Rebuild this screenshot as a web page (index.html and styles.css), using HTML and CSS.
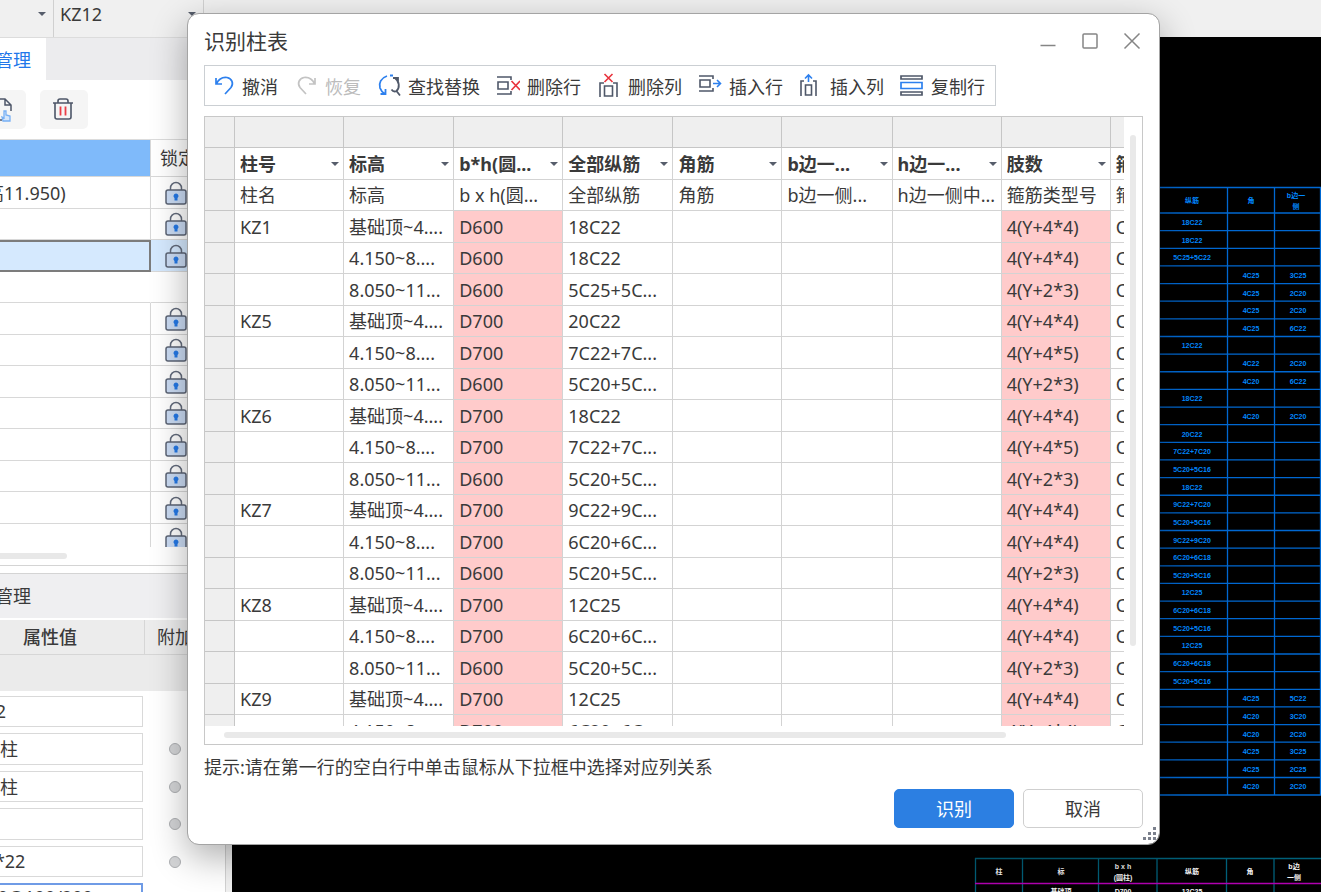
FILE: index.html
```
<!DOCTYPE html>
<html lang="zh-CN">
<head>
<meta charset="utf-8">
<title>识别柱表</title>
<link rel="stylesheet" href="styles.css">
</head>
<body>
<svg class="defs" aria-hidden="true">
  <symbol id="lock" viewBox="0 0 22 24">
    <path d="M5.500 10V7a5.500 5.500 0 0 1 11 0v3" fill="none" stroke="#636b7c" stroke-width="1.500"/>
    <rect x="1" y="9" width="20" height="14" rx="2" fill="#cbdcf4" stroke="#5c6475" stroke-width="1.500"/>
    <path d="M11 12.500a2.500 2.500 0 0 1 1.500 4.500V19.500h-3v-2.500A2.500 2.500 0 0 1 11 12.500z" fill="#2478e6"/>
  </symbol>
</svg>
<div class="app">
  <header class="topbar">
    <select class="combo combo-layer" aria-label="楼层"><option>柱</option></select>
    <select class="combo combo-member" aria-label="构件"><option>KZ12</option></select>
  </header>
  <div class="workspace">
    <aside class="side">
      <nav class="tabs"><a class="tab" href="#drawings">图纸管理</a></nav>
      <div class="tools">
        <button class="tool" aria-label="定位图纸"><svg width="26" height="26" viewBox="0 0 26 26" fill="none"><path d="M7 2H16L22 8V14M16 2V8H22M13 23H5V3" stroke="#4d5668" stroke-width="1.500"/><path d="M15 14v7l-2-1 1 4h7v-5l-4-1v-4z" fill="#d5e6fb" stroke="#77b0f5" stroke-width="1.300"/></svg></button>
        <button class="tool" aria-label="删除"><svg width="26" height="26" viewBox="0 0 26 26" fill="none"><path d="M2 6H22M7 6V4a2 2 0 0 1 2-2h6a2 2 0 0 1 2 2V6M4 6V20a2 2 0 0 0 2 2H18a2 2 0 0 0 2-2V6" stroke="#4d5668" stroke-width="1.600"/><path d="M9.500 9.500V18.500M14.500 9.500V18.500" stroke="#ea3d46" stroke-width="1.800"/></svg></button>
      </div>
      <div class="drawings">
        <table class="drawing-table">
          <colgroup><col class="col-name"><col></colgroup>
          <thead><tr><th class="name-head"></th><th>锁定</th></tr></thead>
          <tbody id="drawing-rows"></tbody>
        </table>
      </div>
      <div class="side-scroll"><span></span></div>
      <h2 class="side-title">图层管理</h2>
      <div class="prop-head"><span class="prop-value">属性值</span><span class="prop-extra">附加</span></div>
      <div class="prop-band"></div>
      <div class="props">
        <div class="prop"><input aria-label="名称" value="KZ12"></div>
        <div class="prop"><input aria-label="结构类别" value="框架柱"><i></i></div>
        <div class="prop"><input aria-label="定额类别" value="框架柱"><i></i></div>
        <div class="prop"><input aria-label="截面宽度" value=""><i></i></div>
        <div class="prop"><input aria-label="全部纵筋" value="124*22"><i></i></div>
        <div class="prop"><input class="current" aria-label="箍筋" value="AC10@100/200"><i></i></div>
      </div>
    </aside>
    <main class="canvas">
      <svg class="cad" id="cad" role="img" aria-label="柱表图纸"></svg>
    </main>
  </div>
</div>

<section class="dialog" role="dialog" aria-labelledby="dialog-title">
  <header class="dialog-head">
    <h1 id="dialog-title">识别柱表</h1>
    <div class="win-buttons">
      <button aria-label="最小化"><svg width="18" height="18" viewBox="0 0 18 18"><path d="M1.500 13.500H16.500"/></svg></button>
      <button aria-label="最大化"><svg width="18" height="18" viewBox="0 0 18 18"><rect x="2" y="2" width="14" height="14" rx="1"/></svg></button>
      <button aria-label="关闭"><svg width="18" height="18" viewBox="0 0 18 18"><path d="M1.500 1.500L16.500 16.500M16.500 1.500L1.500 16.500"/></svg></button>
    </div>
  </header>
  <div class="toolbar" role="toolbar">
    <button><svg width="24" height="24" viewBox="0 0 24 24" fill="none" stroke="#2d80ee" stroke-width="1.700"><path d="M5 5V11H11M5.500 10.500C8 5.500 12 4 16 4.500C21 5.500 23 10.500 20 14.500L14 21"/></svg>撤消</button>
    <button class="off" disabled><svg width="24" height="24" viewBox="0 0 24 24" fill="none" stroke="#c3c3c3" stroke-width="1.700"><path d="M21 5V11H15M20.500 10.500C18 5.500 14 4 10 4.500C5 5.500 3 10.500 6 14.500L12 21"/></svg>恢复</button>
    <button><svg width="24" height="24" viewBox="0 0 24 24" fill="none" stroke-width="1.800"><path d="M10 3C4 5 1.500 10 3 15C4 18 5.500 19.500 8 21M3.500 21H8.500V16M13 2.500h3" stroke="#2d80ee"/><path d="M16 5h5v4M18 5C22.500 8.500 23 14.500 19.500 18C17.500 19 15.500 18 14.500 16.500M19.500 18L23 22.500" stroke="#4f5869"/></svg>查找替换</button>
    <button><svg width="24" height="24" viewBox="0 0 24 24" fill="none" stroke-width="1.600"><path d="M1 4H15V7M1 21H15V18M2 9H12V16H2z" stroke="#4f5869"/><path d="M15.500 8L24 17M24 8L15.500 17" stroke="#e8323c"/></svg>删除行</button>
    <button><svg width="24" height="24" viewBox="0 0 24 24" fill="none" stroke-width="1.600"><path d="M3 24V10H7M20 24V10H16M7.500 13H15.500V23H7.500z" stroke="#4f5869"/><path d="M7.500 1L15.500 9M15.500 1L7.500 9" stroke="#e8323c"/></svg>删除列</button>
    <button><svg width="24" height="24" viewBox="0 0 24 24" fill="none" stroke-width="1.600"><path d="M1 3H15V6M1 18H15V15M2 7H12V14H2z" stroke="#4f5869"/><path d="M15 10.500H22M19 7L22.500 10.500L19 14" stroke="#2d80ee"/></svg>插入行</button>
    <button><svg width="24" height="24" viewBox="0 0 24 24" fill="none" stroke-width="1.600"><path d="M5 8H2V23M14 8H17V23M6.500 12H12.500V22H6.500z" stroke="#4f5869"/><path d="M9.500 9V2M6 5.500L9.500 2L13 5.500" stroke="#2d80ee"/></svg>插入列</button>
    <button><svg width="24" height="24" viewBox="0 0 24 24" fill="none" stroke-width="1.700"><path d="M1 3H22V6H1zM1 19H22V22H1z" stroke="#4f5869"/><path d="M1 9.500H22V15.500H1z" stroke="#2d80ee"/></svg>复制行</button>
  </div>
  <div class="grid">
    <div class="grid-view">
      <table class="columns">
        <colgroup><col class="gutter"><col class="odd"><col class="even"><col class="odd"><col class="even"><col class="odd"><col class="even"><col class="odd"><col class="odd"><col class="odd"></colgroup>
        <tbody id="grid-rows"></tbody>
      </table>
    </div>
    <div class="vscroll"><span></span></div>
    <div class="hscroll"><span></span></div>
  </div>
  <p class="hint">提示:请在第一行的空白行中单击鼠标从下拉框中选择对应列关系</p>
  <footer class="actions">
    <button class="primary">识别</button>
    <button>取消</button>
  </footer>
  <svg class="grip" width="14" height="14" viewBox="0 0 14 14" fill="#7b808c"><path d="M10 0h3v3h-3zM10 5h3v3h-3zM5 5h3v3h-3zM10 10h3v3h-3zM5 10h3v3h-3zM0 10h3v3h-3z"/></svg>
</section>
<script src="app.js"></script>
</body>
</html>
```
FILE: styles.css
```
* { box-sizing: border-box; }
body {
  margin: 0;
  height: 100vh;
  overflow: hidden;
  background: #f0f0f0;
  color: #3a3a3a;
  font-family: "Noto Sans", "Noto Sans CJK SC", sans-serif;
  font-size: 18px;
  line-height: 26px;
}
button, input, select { font: inherit; color: inherit; }
button { cursor: pointer; }
table { border-collapse: separate; border-spacing: 0; table-layout: fixed; }
th, td { padding: 0; text-align: left; font-weight: 400; white-space: nowrap; overflow: hidden; }
.defs { position: absolute; width: 0; height: 0; }

/* The main window starts beyond the left edge of the screen */
.app { display: flex; flex-direction: column; height: 100vh; margin-left: -80px; }
.topbar { position: relative; display: flex; height: 37px; flex: none; background: #f0f0f0; }
.combo, .col-select {
  appearance: none;
  border: 0;
  outline: 0;
  background: transparent linear-gradient(#d0d0d0, #d0d0d0) no-repeat right / 1px 100%;
}
.combo { height: 37px; padding: 0 0 10px 6px; }
.combo-layer { width: 134px; }
.combo-member { width: 150px; }
.topbar::before, .topbar::after, .pick::after {
  content: "";
  border: 4px solid transparent;
  border-top-color: #565d6b;
  border-bottom: 0;
  position: absolute;
  pointer-events: none;
}
.topbar::before { left: 118px; top: 12px; }
.topbar::after { left: 268px; top: 12px; }

.workspace { display: flex; flex: 1; min-height: 0; }
.side {
  width: 306px;
  flex: none;
  display: flex;
  flex-direction: column;
  overflow: hidden;
  background: #fff;
  border-right: 1px solid #d2d2d2;
}
.tabs { display: flex; flex: none; height: 43px; background: #ececee; border-top: 1px solid #dcdcdc; }
.tab { width: 126px; padding: 9px 0 0 39px; background: #fff; color: #2277ea; text-decoration: none; }
.tools { display: flex; flex: none; gap: 14px; height: 59px; padding: 10px 0 10px 58px; }
.tool {
  display: grid;
  place-items: center;
  width: 48px;
  height: 39px;
  padding: 0;
  border: 0;
  border-radius: 5px;
  background: #f5f5f5;
}
.drawings { height: 408px; flex: none; overflow: hidden; border-top: 1px solid #dcdcdc; }
.drawing-table { width: 100%; }
.col-name { width: 231px; }
.drawing-table tr { height: 31px; }
.drawing-table tbody tr:nth-child(odd) { height: 32px; }
.drawing-table thead tr { height: 37px; }
.drawing-table th, .drawing-table td { border-bottom: 1px solid #d8d8d8; border-right: 1px solid #d8d8d8; }
.drawing-table th { padding-left: 9px; }
.drawing-table .name-head { background: #7fbafa; }
.drawing-table td:first-child { padding-left: 66px; }
.drawing-table td + td { padding-left: 14px; }
.drawing-table td svg { display: block; width: 22px; height: 24px; }
.drawing-table .blank td { border-right-color: transparent; }
.drawing-table .chosen td { background: #d5e9fe; }
.drawing-table .chosen td:first-child { border: 2px solid #7c7c7c; }
.side-scroll { flex: none; height: 19px; padding-top: 6px; border-bottom: 1px solid #d4d4d4; }
.side-scroll span { display: block; width: 147px; height: 6px; border-radius: 3px; background: #e8e8e8; }
.side-title {
  flex: none;
  height: 45px;
  margin: 7px 0 2px;
  padding: 9px 0 0 39px;
  font-size: 18px;
  font-weight: 400;
  background: #efeff1;
  border-top: 1px solid #d4d4d4;
}
.prop-head { display: flex; flex: none; height: 35px; background: #ececec; border-bottom: 1px solid #d6d6d6; line-height: 35px; }
.prop-value { width: 225px; padding-left: 103px; border-right: 1px solid #d6d6d6; font-weight: 500; }
.prop-extra { padding-left: 12px; }
.prop-band { flex: none; height: 36px; background: #ebebeb; }
.props { display: flex; flex-direction: column; gap: 6px; padding-top: 5px; }
.prop { display: flex; align-items: center; gap: 26px; flex: none; }
.prop input {
  width: 223px;
  height: 31px;
  padding: 0 0 2px 43px;
  border: 1px solid #d9d9d9;
  background: #fff;
  outline: 0;
}
.prop:nth-child(even) input { height: 32px; }
.prop .current { padding-bottom: 4px; border: 2px solid #6f9be6; }
.prop i { width: 12px; height: 12px; border: 1px solid #aeb0b3; border-radius: 50%; background: #d4d5d7; }
.canvas { flex: 1; min-width: 0; margin-left: 6px; background: #000; overflow: hidden; }
.cad { display: block; width: 100%; height: 100%; font-family: "Liberation Sans", "Noto Sans CJK SC", sans-serif; font-weight: 700; font-size: 7px; }

.dialog {
  position: absolute;
  inset: 13px 161px 47px 187px;
  display: flex;
  flex-direction: column;
  padding: 0 16px 16px;
  border: 1px solid #a4a4a4;
  border-radius: 12px;
  background: #fff;
  background-clip: padding-box;
  box-shadow: 0 12px 36px rgba(0, 0, 0, .32);
}
.dialog-head { display: flex; justify-content: space-between; height: 51px; flex: none; }
.dialog-head h1 { margin: 13px 0 0; font-size: 21px; line-height: 28px; font-weight: 400; }
.win-buttons { display: flex; gap: 24px; margin: 18px 2px 0 0; }
.win-buttons button { width: 18px; height: 18px; padding: 0; border: 0; background: none; }
.win-buttons svg { display: block; fill: none; stroke: #858585; stroke-width: 1.5; }
.toolbar {
  display: flex;
  align-self: flex-start;
  gap: 16px;
  height: 41px;
  flex: none;
  padding: 0 10px 0 6px;
  border: 1px solid #cbcfd3;
}
.toolbar button { display: flex; align-items: center; gap: 7px; padding: 3px 0 0; border: 0; background: none; white-space: nowrap; }
.toolbar button svg { margin-top: -4px; }
.toolbar .off { color: #bcbcbc; }
.grid {
  display: grid;
  grid-template: minmax(0, 1fr) 18px / minmax(0, 1fr) 18px;
  flex: 1;
  min-height: 0;
  margin-top: 10px;
  border: 1px solid #c8c8c8;
}
.grid-view { overflow: hidden; }
.columns { width: 1015px; }
.columns .gutter { width: 30px; }
.columns .odd { width: 109px; }
.columns .even { width: 110px; }
.columns tr { height: 32px; }
.columns tr:nth-child(odd) { height: 31px; }
.columns td, .columns th { padding: 0 0 0 5px; border-right: 1px solid #d3d3d3; border-bottom: 1px solid #d3d3d3; line-height: 28px; }
.columns tr:first-child td, .columns td:first-child { background: #efefef; border-color: #c6c6c6; }
.columns .bad { background: #ffcbcb; }
.columns .pick { position: relative; padding: 0; }
.col-select { display: block; width: 100%; height: 30px; padding: 0 0 0 5px; background: none; font-weight: 700; }
.pick::after { right: 4px; top: 14px; }
.vscroll { padding: 18px 0 80px 6px; }
.vscroll span { display: block; width: 6px; height: 100%; border-radius: 3px; background: #e9e9e9; }
.hscroll { padding: 6px 118px 0 19px; }
.hscroll span { display: block; height: 6px; border-radius: 3px; background: #e9e9e9; }
.hint { flex: none; margin: 9px 0; }
.actions { display: flex; justify-content: flex-end; gap: 9px; flex: none; }
.actions button { width: 120px; height: 39px; padding: 0; border: 1px solid #cfcfcf; border-radius: 5px; background: #fff; }
.actions .primary { border-color: #2c7fe2; background: #2c7fe2; color: #fff; }
.grip { position: absolute; right: 2px; bottom: 3px; }
```
FILE: app.js
```
const heads = ["柱号", "标高", "b*h(圆...", "全部纵筋", "角筋", "b边一...", "h边一...", "肢数", "箍筋"];
const names = ["柱名", "标高", "b x h(圆...", "全部纵筋", "角筋", "b边一侧...", "h边一侧中...", "箍筋类型号", "箍筋"];
const A = "基础顶~4....", B = "4.150~8....", C = "8.050~11...";
const data = [
  ["KZ1", A, "D600", "18C22", "4(Y+4*4)"], ["", B, "D600", "18C22", "4(Y+4*4)"], ["", C, "D600", "5C25+5C...", "4(Y+2*3)"],
  ["KZ5", A, "D700", "20C22", "4(Y+4*4)"], ["", B, "D700", "7C22+7C...", "4(Y+4*5)"], ["", C, "D600", "5C20+5C...", "4(Y+2*3)"],
  ["KZ6", A, "D700", "18C22", "4(Y+4*4)"], ["", B, "D700", "7C22+7C...", "4(Y+4*5)"], ["", C, "D600", "5C20+5C...", "4(Y+2*3)"],
  ["KZ7", A, "D700", "9C22+9C...", "4(Y+4*4)"], ["", B, "D700", "6C20+6C...", "4(Y+4*4)"], ["", C, "D600", "5C20+5C...", "4(Y+2*3)"],
  ["KZ8", A, "D700", "12C25", "4(Y+4*4)"], ["", B, "D700", "6C20+6C...", "4(Y+4*4)"], ["", C, "D600", "5C20+5C...", "4(Y+2*3)"],
  ["KZ9", A, "D700", "12C25", "4(Y+4*4)"], ["", B, "D700", "6C20+6C...", "4(Y+4*4)"]
];
const cell = (text, bad) => `<td${bad ? ' class="bad"' : ""}>${text}</td>`;
document.getElementById("grid-rows").innerHTML =
  `<tr>${"<td></td>".repeat(10)}</tr>` +
  `<tr><td></td>${heads.map((h, i) => `<th class="pick"><select class="col-select" aria-label="第${i + 1}列"><option>${h}</option></select></th>`).join("")}</tr>` +
  `<tr><td></td>${names.map(n => cell(n)).join("")}</tr>` +
  data.map(([id, level, size, bars, legs]) =>
    `<tr><td></td>${cell(id)}${cell(level)}${cell(size, true)}${cell(bars)}${cell("").repeat(3)}${cell(legs, true)}${cell("C8@100")}</tr>`).join("");

const lock = '<svg role="img" aria-label="已锁定"><use href="#lock"/></svg>';
document.getElementById("drawing-rows").innerHTML = Array.from({ length: 12 }, (_, i) => {
  const kind = i === 2 ? "chosen" : i === 3 ? "blank" : "";
  return `<tr class="${kind}"><td>${i === 0 ? "高11.950)" : ""}</td><td>${i === 3 ? "" : lock}</td></tr>`;
}).join("");

/* CAD drawing: column schedule at the right, second schedule at the bottom */
const rows = [
  ["18C22"], ["18C22"], ["5C25+5C22"], ["", "4C25", "3C25"], ["", "4C25", "2C20"], ["", "4C25", "2C20"], ["", "4C25", "6C22"],
  ["12C22"], ["", "4C22", "2C20"], ["", "4C20", "6C22"], ["18C22"], ["", "4C20", "2C20"], ["20C22"], ["7C22+7C20"], ["5C20+5C16"],
  ["18C22"], ["9C22+7C20"], ["5C20+5C16"], ["9C22+9C20"], ["6C20+6C18"], ["5C20+5C16"], ["12C25"], ["6C20+6C18"], ["5C20+5C16"],
  ["12C25"], ["6C20+6C18"], ["5C20+5C16"], ["", "4C25", "5C22"], ["", "4C20", "3C20"], ["", "4C20", "2C20"], ["", "4C25", "3C25"],
  ["", "4C25", "2C25"], ["", "4C20", "2C20"]
];
const line = (x1, y1, x2, y2, color) => `<path d="M${x1} ${y1}L${x2} ${y2}" stroke="${color}" stroke-width="1.3"/>`;
const label = (x, y, text, color) => `<text x="${x}" y="${y}" text-anchor="middle" fill="${color}">${text}</text>`;
const blue = "#0068d2", bright = "#0088ff", teal = "#00607a";
let art = "";
art += line(900, 150.5, 1089, 150.5, blue);
rows.forEach((row, i) => {
  const y = 176 + i * 17.64;
  art += line(900, y, 1089, y, blue);
  [960, 1019, 1066].forEach((x, c) => { if (row[c]) art += label(x, y + 12, row[c], bright); });
});
art += line(900, 758, 1089, 758, blue);
[995.5, 1042.5, 1088.5].forEach(x => { art += line(x, 150, x, 758, blue); });
art += label(960, 166, "纵筋", bright) + label(1019, 166, "角", bright) + label(1064, 161, "b边一", bright) + label(1064, 172, "侧", bright);
art += line(743, 821.5, 1089, 821.5, teal);
[743.5, 790.5, 866.5, 925, 994.5, 1042].forEach(x => { art += line(x, 821, x, 856, teal); });
art += line(743, 846.5, 1089, 846.5, "#b000b0");
[[767, 837, "柱"], [829, 837, "标"], [891, 832, "b x h"], [891, 843, "(圆柱)"], [960, 837, "纵筋"], [1018, 837, "角"], [1062, 832, "b边"], [1062, 843, "一侧"],
 [829, 857, "基础顶"], [891, 857, "D700"], [960, 857, "12C25"]].forEach(([x, y, t]) => { art += label(x, y, t, "#f4f4f4"); });
document.getElementById("cad").innerHTML = art;
```
